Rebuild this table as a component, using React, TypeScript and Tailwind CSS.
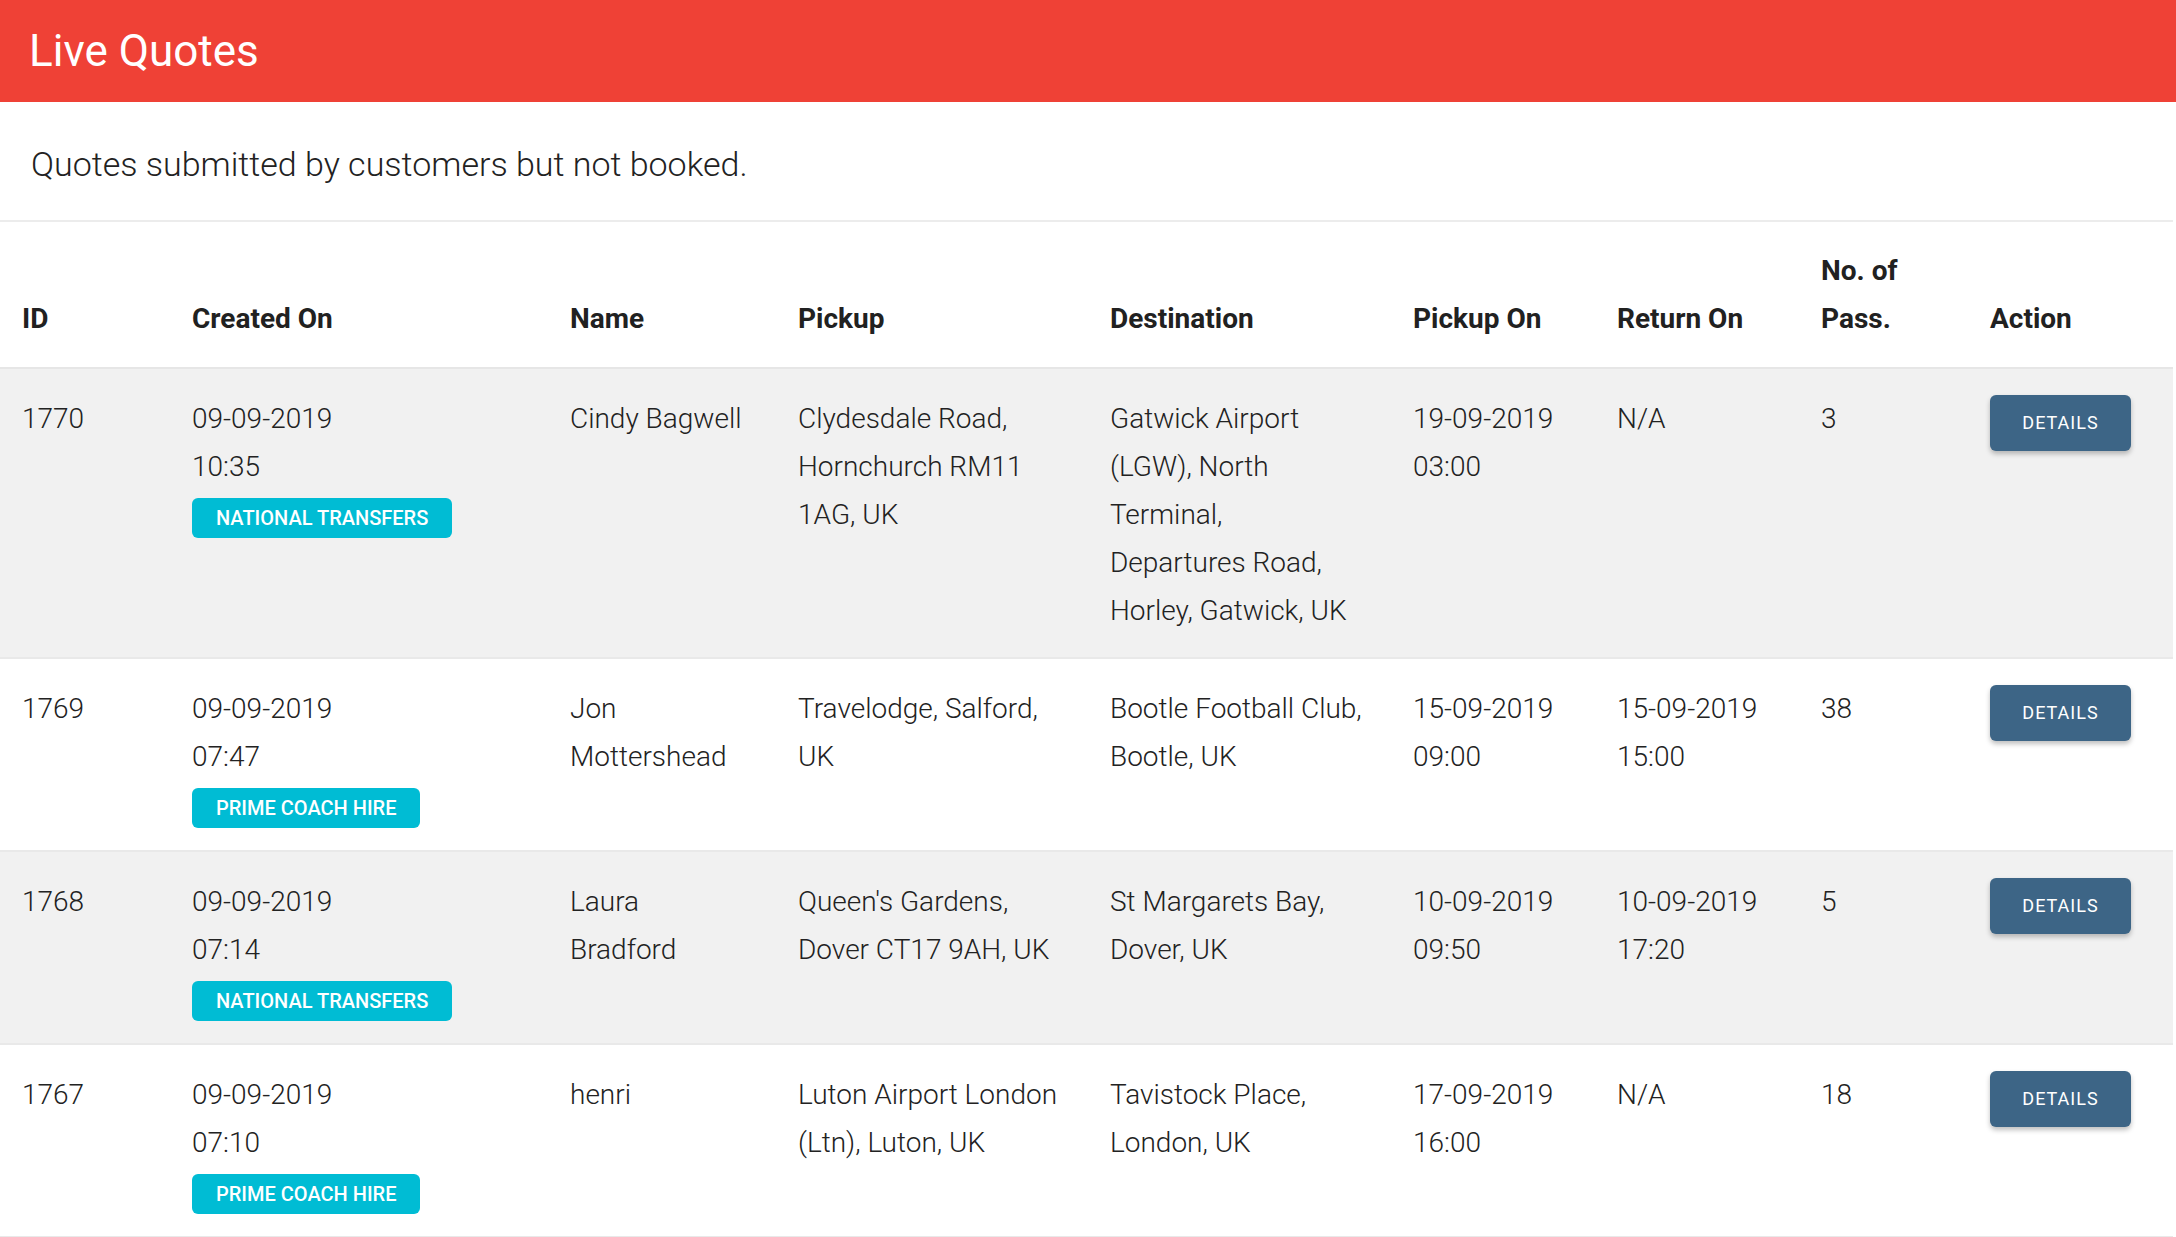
import React from 'react';

interface Quote {
    id: string;
    date: string;
    time: string;
    company: string;
    name: string[];
    pickup: string[];
    destination: string[];
    pickupOn: string[];
    returnOn: string[];
    pass: string;
}

const quotes: Quote[] = [
    {
        id: '1770',
        date: '09-09-2019',
        time: '10:35',
        company: 'NATIONAL TRANSFERS',
        name: ['Cindy Bagwell'],
        pickup: ['Clydesdale Road,', 'Hornchurch RM11', '1AG, UK'],
        destination: ['Gatwick Airport', '(LGW), North', 'Terminal,', 'Departures Road,', 'Horley, Gatwick, UK'],
        pickupOn: ['19-09-2019', '03:00'],
        returnOn: ['N/A'],
        pass: '3',
    },
    {
        id: '1769',
        date: '09-09-2019',
        time: '07:47',
        company: 'PRIME COACH HIRE',
        name: ['Jon', 'Mottershead'],
        pickup: ['Travelodge, Salford,', 'UK'],
        destination: ['Bootle Football Club,', 'Bootle, UK'],
        pickupOn: ['15-09-2019', '09:00'],
        returnOn: ['15-09-2019', '15:00'],
        pass: '38',
    },
    {
        id: '1768',
        date: '09-09-2019',
        time: '07:14',
        company: 'NATIONAL TRANSFERS',
        name: ['Laura', 'Bradford'],
        pickup: ["Queen's Gardens,", 'Dover CT17 9AH, UK'],
        destination: ['St Margarets Bay,', 'Dover, UK'],
        pickupOn: ['10-09-2019', '09:50'],
        returnOn: ['10-09-2019', '17:20'],
        pass: '5',
    },
    {
        id: '1767',
        date: '09-09-2019',
        time: '07:10',
        company: 'PRIME COACH HIRE',
        name: ['henri'],
        pickup: ['Luton Airport London', '(Ltn), Luton, UK'],
        destination: ['Tavistock Place,', 'London, UK'],
        pickupOn: ['17-09-2019', '16:00'],
        returnOn: ['N/A'],
        pass: '18',
    },
];

const th = 'text-left align-bottom pl-[22px] pr-[22px] pt-[25px] pb-6 text-[28px] font-bold leading-[48px] text-[#212121]';
const td = 'align-top pl-[22px] pr-[22px] pt-[26px] pb-[22px]';

const Lines = ({ lines }: { lines: string[] }) => (
    <>
        {lines.map((l, i) => (
            <div key={i} className="whitespace-nowrap">
                {l}
            </div>
        ))}
    </>
);

export default function App() {
    return (
        <div className="min-h-screen bg-white" style={{ fontFamily: 'Roboto, "Noto Sans", sans-serif' }}>
            <div className="h-[102px] bg-[#ef4136] flex items-center pl-[29px]">
                <h1 className="text-[44px] text-white font-normal">Live Quotes</h1>
            </div>
            <div className="mr-[3px]">
                <div className="h-[120px] flex items-center pl-[31px] border-b-2 border-[#ececec]">
                    <p className="text-[34px] font-light text-[#222] pt-[6px]">Quotes submitted by customers but not booked.</p>
                </div>
                <table className="w-full table-fixed border-collapse">
                    <colgroup>
                        <col className="w-[170px]" />
                        <col className="w-[378px]" />
                        <col className="w-[228px]" />
                        <col className="w-[312px]" />
                        <col className="w-[303px]" />
                        <col className="w-[204px]" />
                        <col className="w-[204px]" />
                        <col className="w-[169px]" />
                        <col />
                    </colgroup>
                    <thead>
                        <tr className="border-b-2 border-[#e6e6e6]">
                            <th className={th}>ID</th>
                            <th className={th}>Created On</th>
                            <th className={th}>Name</th>
                            <th className={th}>Pickup</th>
                            <th className={th}>Destination</th>
                            <th className={th}>Pickup On</th>
                            <th className={th}>Return On</th>
                            <th className={th}>No. of Pass.</th>
                            <th className={th}>Action</th>
                        </tr>
                    </thead>
                    <tbody className="text-[28px] font-light leading-[48px] text-[#222]">
                        {quotes.map((q, i) => (
                            <tr key={q.id} className={`border-b-2 border-[#e9e9e9] ${i % 2 === 0 ? 'bg-[#f1f1f1]' : 'bg-white'}`}>
                                <td className={td}>{q.id}</td>
                                <td className={td}>
                                    <div>{q.date}</div>
                                    <div>{q.time}</div>
                                    <div className="mt-[7px] flex h-10 w-fit items-center rounded-md bg-[#00bcd4] px-6 text-[20px] font-medium leading-none text-white">
                                        {q.company}
                                    </div>
                                </td>
                                <td className={td}>
                                    <Lines lines={q.name} />
                                </td>
                                <td className={td}>
                                    <Lines lines={q.pickup} />
                                </td>
                                <td className={td}>
                                    <Lines lines={q.destination} />
                                </td>
                                <td className={td}>
                                    <Lines lines={q.pickupOn} />
                                </td>
                                <td className={td}>
                                    <Lines lines={q.returnOn} />
                                </td>
                                <td className={td}>{q.pass}</td>
                                <td className={td}>
                                    <button className="h-14 w-[141px] rounded-md bg-[#3d6586] text-[18px] font-normal leading-none tracking-[1px] text-white shadow-[0_3px_5px_rgba(0,0,0,0.25)]">
                                        DETAILS
                                    </button>
                                </td>
                            </tr>
                        ))}
                    </tbody>
                </table>
            </div>
        </div>
    );
}
